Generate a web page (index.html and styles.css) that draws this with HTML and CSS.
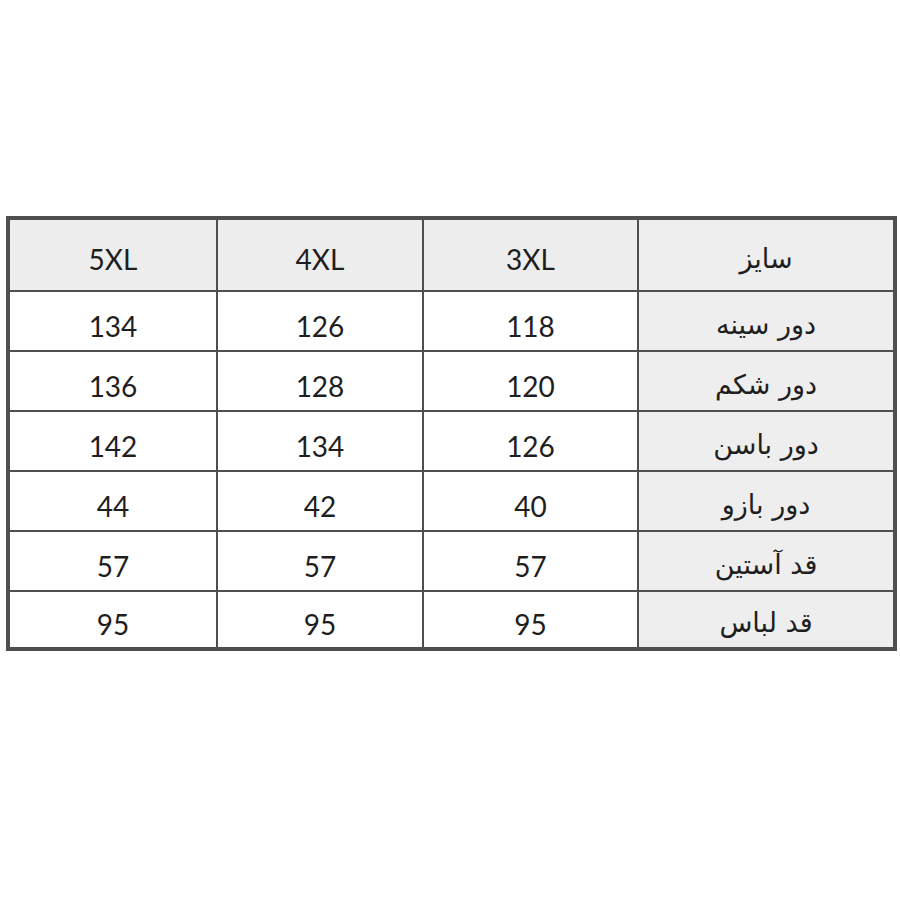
FILE: index.html
```html
<!DOCTYPE html>
<html lang="fa">
<head>
<meta charset="utf-8">
<title>جدول سایز</title>
<link rel="stylesheet" href="styles.css">
</head>
<body>
<div class="page">
  <div class="size-table" dir="rtl">
    <div class="cell head label">سایز</div>
    <div class="cell head num">3XL</div>
    <div class="cell head num">4XL</div>
    <div class="cell head num">5XL</div>

    <div class="cell label">دور سینه</div>
    <div class="cell num">118</div>
    <div class="cell num">126</div>
    <div class="cell num">134</div>

    <div class="cell label">دور شکم</div>
    <div class="cell num">120</div>
    <div class="cell num">128</div>
    <div class="cell num">136</div>

    <div class="cell label">دور باسن</div>
    <div class="cell num">126</div>
    <div class="cell num">134</div>
    <div class="cell num">142</div>

    <div class="cell label">دور بازو</div>
    <div class="cell num">40</div>
    <div class="cell num">42</div>
    <div class="cell num">44</div>

    <div class="cell label">قد آستین</div>
    <div class="cell num">57</div>
    <div class="cell num">57</div>
    <div class="cell num">57</div>

    <div class="cell label">قد لباس</div>
    <div class="cell num">95</div>
    <div class="cell num">95</div>
    <div class="cell num">95</div>
  </div>
</div>
</body>
</html>
```

FILE: styles.css
```css
html, body {
  margin: 0;
  padding: 0;
  background: #ffffff;
}

.page {
  width: 900px;
  height: 900px;
  padding-top: 216px;
  padding-left: 6px;
  box-sizing: border-box;
}

.size-table {
  display: grid;
  grid-template-columns: 254px 213px 204px 206px;
  grid-template-rows: 70px repeat(5, 58px) 55px;
  gap: 2px;
  width: 891px;
  box-sizing: border-box;
  padding: 4px;
  background: #4f4f4f;
}

.cell {
  background: #ffffff;
  color: #1e1e1e;
  display: flex;
  align-items: center;
  justify-content: center;
  padding-top: 9px;
  box-sizing: border-box;
}

.cell.head {
  background: #ededed;
  padding-top: 8px;
}

.cell.label {
  background: #eeeeee;
  font-family: "DejaVu Sans", "Liberation Sans", sans-serif;
  font-size: 27px;
  padding-top: 6px;
}

.cell.num {
  font-family: Lato, "Open Sans", sans-serif;
  font-size: 28px;
  direction: ltr;
}
```
